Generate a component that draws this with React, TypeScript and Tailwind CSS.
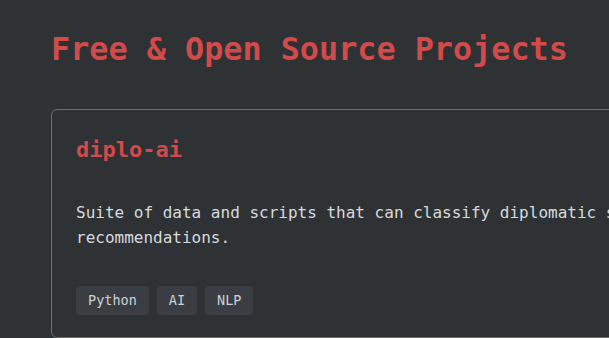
const TAGS = ["Python", "AI", "NLP"];

export default function App() {
  return (
    <div className="min-h-[338px] h-[338px] w-full overflow-hidden bg-[#2f3235] font-['DejaVu_Sans_Mono',monospace]">
      <div className="pl-[51px] pt-[29px]">
        <h1 className="text-[31.8px] font-bold leading-[40px] text-[#d24a4a]">
          Free &amp; Open Source Projects
        </h1>

        <div className="mt-[40px] w-[850px] rounded-md border border-[#6e6e6e] px-6 pt-[24px] pb-[22px]">
          <h2 className="text-[22px] font-bold leading-[32px] text-[#d24a4a]">diplo-ai</h2>
          <p className="mt-[34px] text-[16px] leading-[25px] text-[#d6dadd]">
            Suite of data and scripts that can classify diplomatic statements into policy
            recommendations.
          </p>
          <div className="mt-[36px] flex gap-2">
            {TAGS.map((t) => (
              <span
                key={t}
                className="rounded bg-[#3a3e42] px-3 py-[5px] text-[13.5px] leading-[19px] text-[#cdd1d5]"
              >
                {t}
              </span>
            ))}
          </div>
        </div>
      </div>
    </div>
  );
}
